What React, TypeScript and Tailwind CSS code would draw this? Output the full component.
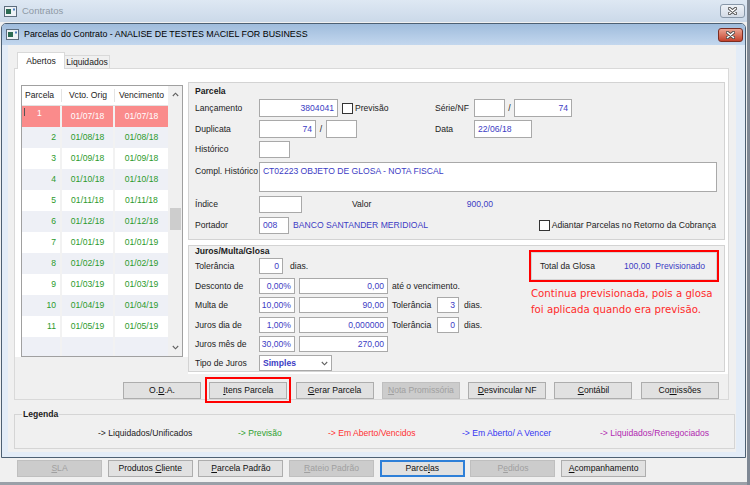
import React from "react";

type Row = [string, string, string];

const rows: Row[] = [
  ["1", "01/07/18", "01/07/18"],
  ["2", "01/08/18", "01/08/18"],
  ["3", "01/09/18", "01/09/18"],
  ["4", "01/10/18", "01/10/18"],
  ["5", "01/11/18", "01/11/18"],
  ["6", "01/12/18", "01/12/18"],
  ["7", "01/01/19", "01/01/19"],
  ["8", "01/02/19", "01/02/19"],
  ["9", "01/03/19", "01/03/19"],
  ["10", "01/04/19", "01/04/19"],
  ["11", "01/05/19", "01/05/19"],
  ["", "", ""],
];

function Hot({ t, u }: { t: string; u: number }) {
  if (u < 0) return <span>{t}</span>;
  return (
    <span className="whitespace-pre">
      {t.slice(0, u)}
      <span className="underline underline-offset-[1px]">{t[u]}</span>
      {t.slice(u + 1)}
    </span>
  );
}

type BtnProps = { t: string; u: number; w: string; off?: boolean; focus?: boolean };

function Btn({ t, u, w, off, focus }: BtnProps) {
  const tone = off
    ? "border-[#bfbfbf] bg-[#cccccc] text-[#a0a0a0]"
    : focus
      ? "border-[#2f80d8] bg-[#e1e1e1] text-[#111] shadow-[inset_0_0_0_1px_#2f80d8]"
      : "border-[#adadad] bg-[#e1e1e1] text-[#111]";
  return (
    <div className={`flex h-[17px] shrink-0 items-center justify-center border text-[8.6px] ${w} ${tone}`}>
      <Hot t={t} u={u} />
    </div>
  );
}

type BoxProps = { w: string; h?: string; v?: string; right?: boolean; bold?: boolean };

function Box({ w, h = "h-[18px]", v = "", right, bold }: BoxProps) {
  return (
    <div
      className={`flex shrink-0 items-center border border-[#a9a9a9] bg-white px-[3px] text-[#3c3cc4] ${w} ${h} ${
        right ? "justify-end" : "justify-start"
      } ${bold ? "font-bold" : ""}`}
    >
      {v}
    </div>
  );
}

function Check() {
  return <div className="h-[11px] w-[11px] shrink-0 border border-[#333] bg-white" />;
}

function WinIcon() {
  return (
    <svg width="13" height="11" viewBox="0 0 13 11" className="shrink-0">
      <rect x="0.5" y="0.5" width="12" height="10" fill="#eef2f6" stroke="#5d6d7e" />
      <rect x="2" y="3" width="5" height="5" fill="#2c6b52" />
      <rect x="9" y="2.5" width="2" height="2" fill="#4d7fbf" />
    </svg>
  );
}

function CloseX() {
  return (
    <svg width="9" height="8" viewBox="0 0 9 8">
      <path d="M1.5 1.5 L7.5 6.5 M7.5 1.5 L1.5 6.5" stroke="#4b4b4b" strokeWidth="3.2" strokeLinecap="round" />
      <path d="M1.5 1.5 L7.5 6.5 M7.5 1.5 L1.5 6.5" stroke="#ffffff" strokeWidth="1.6" strokeLinecap="round" />
    </svg>
  );
}

function Chevron({ up }: { up?: boolean }) {
  return (
    <svg width="7" height="5" viewBox="0 0 7 5">
      <path d={up ? "M0.8 4 L3.5 1.2 L6.2 4" : "M0.8 1 L3.5 3.8 L6.2 1"} stroke="#606060" strokeWidth="1.1" fill="none" />
    </svg>
  );
}

function Grid() {
  return (
    <div className="flex h-[272px] w-[162px] overflow-hidden border border-[#a0a0a0] bg-white">
      <div className="flex w-[146px] flex-col">
        <div className="flex h-[20px] shrink-0 items-center border-b border-[#e2e2e2] text-[#222]">
          <div className="w-[40px] border-r border-[#e4e4e4] pl-[3px]">Parcela</div>
          <div className="w-[53px] border-r border-[#e4e4e4] text-center">Vcto. Orig</div>
          <div className="w-[53px] text-center">Vencimento</div>
        </div>
        {rows.map((r, i) => {
          const sel = i === 0;
          const bg = sel ? "bg-[#fa8b8b] text-white" : i % 2 === 1 ? "bg-[#eef0f6] text-[#2b9a2b]" : "bg-white text-[#2b9a2b]";
          return (
            <div key={i} className={`flex h-[21px] shrink-0 ${bg}`}>
              {sel ? (
                <div className="relative flex w-[40px] items-start border-r-2 border-[#f2f2f2] pt-[2px]">
                  <div className="ml-[2px] h-[8px] w-[1px] bg-[#555]" />
                  <span className="ml-[12px] leading-[10px]">1</span>
                </div>
              ) : (
                <div className="flex w-[40px] items-center justify-end border-r-2 border-[#f2f2f2] pr-[4px]">{r[0]}</div>
              )}
              <div className="flex w-[53px] items-center justify-center border-r-2 border-[#f2f2f2]">{r[1]}</div>
              <div className="flex w-[53px] items-center justify-center">{r[2]}</div>
            </div>
          );
        })}
      </div>
      <div className="flex w-[14px] flex-col items-center bg-[#f0f0f0]">
        <div className="flex h-[17px] items-center">
          <Chevron up />
        </div>
        <div className="mt-[105px] h-[22px] w-[11px] bg-[#cdcdcd]" />
        <div className="flex-1" />
        <div className="flex h-[17px] items-center">
          <Chevron />
        </div>
      </div>
    </div>
  );
}

function Parcela() {
  return (
    <div className="flex h-[158px] flex-col border border-[#d3d3d3] bg-[#f0f0f0] pl-[6px] pr-[7px]">
      <div className="mt-[1px] h-[14px] font-bold leading-[14px]">Parcela</div>
      <div className="mt-[1px] flex h-[18px] items-center">
        <div className="flex w-[240px] items-center">
          <span className="w-[64px]">Lançamento</span>
          <Box w="w-[79px]" v="3804041" right />
          <div className="ml-[4px]">
            <Check />
          </div>
          <span className="ml-[2px]">Previsão</span>
        </div>
        <span className="w-[39px]">Série/NF</span>
        <Box w="w-[31px]" />
        <span className="w-[9px] text-center">/</span>
        <Box w="w-[58px]" v="74" right />
      </div>
      <div className="mt-[3px] flex h-[18px] items-center">
        <div className="flex w-[240px] items-center">
          <span className="w-[64px]">Duplicata</span>
          <Box w="w-[57px]" v="74" right />
          <span className="w-[10px] text-center">/</span>
          <Box w="w-[31px]" />
        </div>
        <span className="w-[39px]">Data</span>
        <Box w="w-[58px]" v="22/06/18" />
      </div>
      <div className="mt-[3px] flex h-[17px] items-center">
        <span className="w-[64px]">Histórico</span>
        <Box w="w-[31px]" h="h-[17px]" />
      </div>
      <div className="mt-[4px] flex h-[30px] items-start">
        <span className="mt-[3px] w-[64px]">Compl. Histórico</span>
        <div className="h-[30px] w-[459px] border border-[#a9a9a9] bg-white px-[3px] pt-[2px] text-[#3c3cc4]">
          CT02223 OBJETO DE GLOSA - NOTA FISCAL
        </div>
      </div>
      <div className="mt-[4px] flex h-[17px] items-center">
        <span className="w-[64px]">Índice</span>
        <Box w="w-[43px]" h="h-[17px]" />
        <div className="ml-[50px] flex w-[141px] items-center justify-between">
          <span>Valor</span>
          <span className="text-[#3c3cc4]">900,00</span>
        </div>
      </div>
      <div className="mt-[4px] flex h-[17px] items-center">
        <span className="w-[64px]">Portador</span>
        <Box w="w-[30px]" h="h-[17px]" v="008" />
        <span className="ml-[4px] text-[#3c3cc4]">BANCO SANTANDER MERIDIOAL</span>
        <div className="ml-auto flex items-center pr-[1px]">
          <Check />
          <span className="ml-[2px]">Adiantar Parcelas no Retorno da Cobrança</span>
        </div>
      </div>
    </div>
  );
}

function Juros() {
  const row = "flex h-[16px] items-center";
  return (
    <div className="mt-[5px] flex h-[127px] border border-[#d3d3d3] bg-[#f0f0f0] pl-[6px] pr-[5px]">
      <div className="flex flex-col">
        <div className="h-[10px] font-bold leading-[10px]">Juros/Multa/Glosa</div>
        <div className={`mt-[2px] ${row}`}>
          <span className="w-[64px]">Tolerância</span>
          <Box w="w-[24px]" h="h-[16px]" v="0" right />
          <span className="ml-[7px]">dias.</span>
        </div>
        <div className={`mt-[4px] ${row}`}>
          <span className="w-[64px]">Desconto de</span>
          <Box w="w-[36px]" h="h-[16px]" v="0,00%" right />
          <div className="ml-[4px]">
            <Box w="w-[89px]" h="h-[16px]" v="0,00" right />
          </div>
          <span className="ml-[4px]">até o vencimento.</span>
        </div>
        <div className={`mt-[3px] ${row}`}>
          <span className="w-[64px]">Multa de</span>
          <Box w="w-[36px]" h="h-[16px]" v="10,00%" right />
          <div className="ml-[4px]">
            <Box w="w-[89px]" h="h-[16px]" v="90,00" right />
          </div>
          <span className="ml-[4px] w-[45px]">Tolerância</span>
          <Box w="w-[22px]" h="h-[16px]" v="3" right />
          <span className="ml-[5px]">dias.</span>
        </div>
        <div className={`mt-[4px] ${row}`}>
          <span className="w-[64px]">Juros dia de</span>
          <Box w="w-[36px]" h="h-[16px]" v="1,00%" right />
          <div className="ml-[4px]">
            <Box w="w-[89px]" h="h-[16px]" v="0,000000" right />
          </div>
          <span className="ml-[4px] w-[45px]">Tolerância</span>
          <Box w="w-[22px]" h="h-[16px]" v="0" right />
          <span className="ml-[5px]">dias.</span>
        </div>
        <div className={`mt-[3px] ${row}`}>
          <span className="w-[64px]">Juros mês de</span>
          <Box w="w-[36px]" h="h-[16px]" v="30,00%" right />
          <div className="ml-[4px]">
            <Box w="w-[89px]" h="h-[16px]" v="270,00" right />
          </div>
        </div>
        <div className={`mt-[3px] ${row}`}>
          <span className="w-[64px]">Tipo de Juros</span>
          <div className="flex h-[16px] w-[73px] items-center justify-between border border-[#a9a9a9] bg-white pl-[3px] pr-[3px] text-[#3c3cc4]">
            <span className="font-bold">Simples</span>
            <Chevron />
          </div>
        </div>
      </div>
      <div className="ml-auto flex flex-col pt-[4px]">
        <div className="h-[32px] w-[190px] border-2 border-[#ff0000]">
          <div className="flex h-full items-center border border-[#d4d4d4] pl-[8px] pr-[11px]">
            <span>Total da Glosa</span>
            <span className="ml-auto text-[#3c3cc4]">100,00</span>
            <span className="ml-[5px] text-[#3c3cc4]">Previsionado</span>
          </div>
        </div>
        <div className="ml-[2px] mt-[4px] font-['DejaVu_Sans',sans-serif] text-[10.2px] leading-[16px] text-[#ff2a2a]">
          <div>Continua previsionada, pois a glosa</div>
          <div>foi aplicada quando era previsão.</div>
        </div>
      </div>
    </div>
  );
}

export default function App() {
  return (
    <div className="relative flex h-[485px] w-[750px] flex-col overflow-hidden border-r-[3px] border-[#7f8894] bg-[#f0f0f0] font-['Liberation_Sans',Arial,sans-serif] text-[8.6px] text-[#1c1c1c]">
      <div className="flex h-[22px] shrink-0 items-center bg-gradient-to-b from-[#dee8f3] to-[#cbd9e9] pl-[4px] pr-[2px]">
        <WinIcon />
        <span className="ml-[5px] text-[9.5px] text-[#8e99a5]">Contratos</span>
        <div className="ml-auto flex h-[14px] w-[25px] items-center justify-center rounded-[3px] border border-[#8797a8] bg-gradient-to-b from-[#eef2f7] to-[#d3dbe6]">
          <CloseX />
        </div>
      </div>
      <div className="h-[1px] shrink-0" />
      <div className="ml-[1px] flex h-[435px] w-[745px] shrink-0 flex-col overflow-hidden rounded-t-[5px] border border-[#4d6073]">
        <div className="flex h-[21px] shrink-0 items-center bg-gradient-to-b from-[#9fbcdc] to-[#c3d7ee] pl-[4px] pr-[2px]">
          <WinIcon />
          <span className="ml-[5px] text-[8.9px] text-[#000]">Parcelas do Contrato - ANALISE DE TESTES MACIEL FOR BUSINESS</span>
          <div className="ml-auto flex h-[14px] w-[25px] items-center justify-center rounded-[3px] border border-[#7b2d22] bg-gradient-to-b from-[#eba392] to-[#c3402b]">
            <CloseX />
          </div>
        </div>
        <div className="flex flex-1 bg-[#e3ecf7] pb-[5px] pl-[6px] pr-[9px]">
          <div className="flex flex-1 flex-col bg-[#f0f0f0]">
            <div className="mt-[7px] flex h-[16px] items-end pl-[9px]">
              <div className="relative z-10 -mb-px flex h-[17px] w-[48px] items-center justify-center border border-b-0 border-[#d9d9d9] bg-white">
                Abertos
              </div>
              <div className="flex h-[13px] w-[45px] items-center justify-center border border-b-0 border-l-0 border-[#d9d9d9] bg-[#f0f0f0]">
                Liquidados
              </div>
            </div>
            <div className="ml-[6px] flex h-[332px] w-[715px] flex-col border border-[#d9d9d9] bg-[#f0f0f0]">
              <div className="flex h-[305px]">
                <div className="flex w-[173px] flex-col">
                  <div className="bg-white pl-[6px] pr-[5px] pt-[16px]">
                    <Grid />
                  </div>
                </div>
                <div className="w-[540px] bg-white pr-[3px] pt-[13px]">
                  <Parcela />
                  <Juros />
                </div>
              </div>
              <div className="flex gap-[8.3px] pl-[108px] pt-[8px]">
                <Btn t="O.D.A." u={2} w="w-[78px]" />
                <div className="relative">
                  <Btn t="Itens Parcela" u={0} w="w-[78px]" />
                  <div className="absolute -bottom-[4px] -left-[4px] -right-[4px] -top-[5px] border-2 border-[#ff0000]" />
                </div>
                <Btn t="Gerar Parcela" u={0} w="w-[78px]" />
                <Btn t="Nota Promissória" u={0} w="w-[78px]" off />
                <Btn t="Desvincular NF" u={0} w="w-[78px]" />
                <Btn t="Contábil" u={0} w="w-[78px]" />
                <Btn t="Comissões" u={2} w="w-[78px]" />
              </div>
            </div>
            <fieldset className="ml-[6px] mt-[9px] h-[40px] w-[721px] border border-[#d5d5d5] px-[7px]">
              <legend className="px-[1px] text-[8.6px] font-bold leading-[10px]">Legenda</legend>
              <div className="mt-[8px] flex h-[12px] items-center pl-[76px]">
                <span className="w-[140px] text-[#222]">-&gt; Liquidados/Unificados</span>
                <span className="w-[90px] text-[#2f9f2f]">-&gt; Previsão</span>
                <span className="w-[134px] text-[#ff3030]">-&gt; Em Aberto/Vencidos</span>
                <span className="w-[138px] text-[#3434f2]">-&gt; Em Aberto/ A Vencer</span>
                <span className="text-[#b02ab0]">-&gt; Liquidados/Renegociados</span>
              </div>
            </fieldset>
          </div>
        </div>
      </div>
      <div className="mt-[2px] flex gap-[5.7px] pl-[17px]">
        <Btn t="SLA" u={0} w="w-[85px]" off />
        <Btn t="Produtos Cliente" u={9} w="w-[85px]" />
        <Btn t="Parcela Padrão" u={0} w="w-[85px]" />
        <Btn t="Rateio Padrão" u={0} w="w-[85px]" off />
        <Btn t="Parcelas" u={5} w="w-[85px]" focus />
        <Btn t="Pedidos" u={1} w="w-[85px]" off />
        <Btn t="Acompanhamento" u={0} w="w-[85px]" />
      </div>
      <div className="mt-auto h-[3px] shrink-0 bg-[#9aa0a8]" />
    </div>
  );
}
